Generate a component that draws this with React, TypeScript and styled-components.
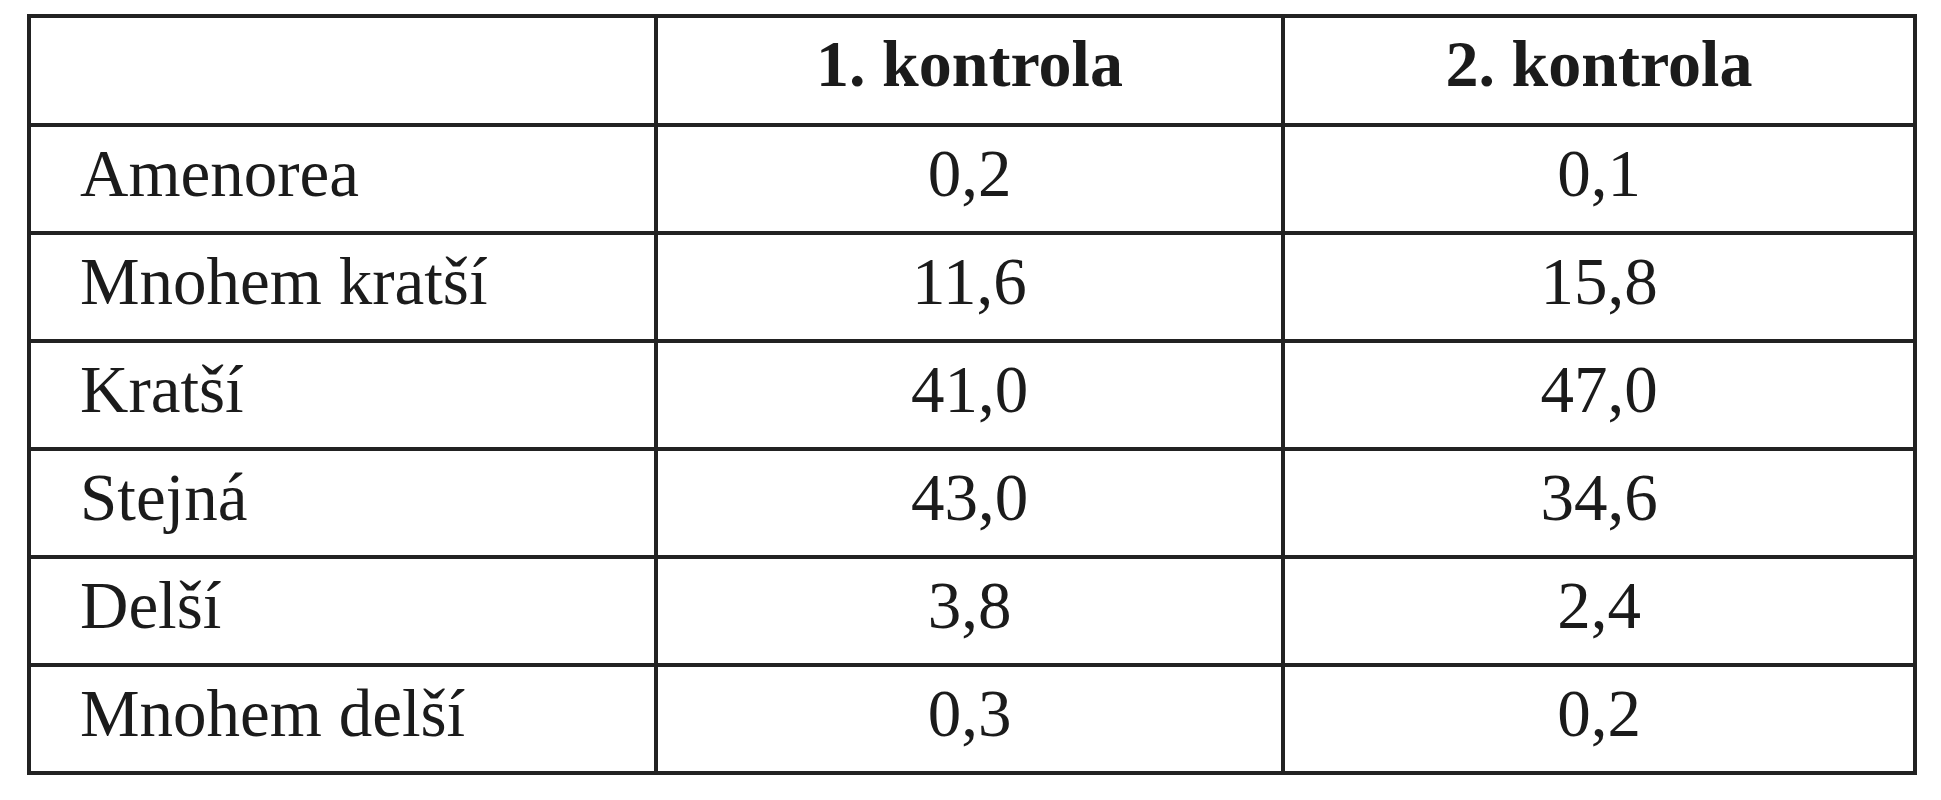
import styled, { createGlobalStyle } from 'styled-components';

type Row = {
  label: string;
  first: string;
  second: string;
};

const rows: Row[] = [
  { label: 'Amenorea', first: '0,2', second: '0,1' },
  { label: 'Mnohem kratší', first: '11,6', second: '15,8' },
  { label: 'Kratší', first: '41,0', second: '47,0' },
  { label: 'Stejná', first: '43,0', second: '34,6' },
  { label: 'Delší', first: '3,8', second: '2,4' },
  { label: 'Mnohem delší', first: '0,3', second: '0,2' },
];

const GlobalStyle = createGlobalStyle`
  html, body {
    margin: 0;
    padding: 0;
    background: #ffffff;
  }
  body {
    font-family: "Liberation Serif", "Times New Roman", serif;
    color: #1b1b1b;
  }
`;

const Page = styled.div`
  padding: 14px 0 0 27px;
`;

const Table = styled.table`
  border-collapse: separate;
  border-spacing: 0;
  border-top: 4px solid #222;
  border-left: 4px solid #222;
  table-layout: fixed;
  width: 1890px;
`;

const HeadCell = styled.th<{ $width?: number }>`
  box-sizing: border-box;
  width: ${(p) => (p.$width ? `${p.$width}px` : 'auto')};
  height: 109px;
  padding: 0 0 12px 0;
  border-right: 4px solid #222;
  border-bottom: 4px solid #222;
  font-size: 66px;
  font-weight: 700;
  text-align: center;
  vertical-align: middle;
  line-height: 1.1;
`;

const Cell = styled.td<{ $label?: boolean }>`
  box-sizing: border-box;
  height: 108px;
  padding: 0 0 10px ${(p) => (p.$label ? '49px' : '0')};
  border-right: 4px solid #222;
  border-bottom: 4px solid #222;
  font-size: 67px;
  font-weight: 400;
  text-align: ${(p) => (p.$label ? 'left' : 'center')};
  vertical-align: middle;
  line-height: 1.1;
  white-space: nowrap;
`;

export default function App() {
  return (
    <>
      <GlobalStyle />
      <Page>
        <Table>
          <thead>
            <tr>
              <HeadCell $width={627} />
              <HeadCell $width={627}>1. kontrola</HeadCell>
              <HeadCell>2. kontrola</HeadCell>
            </tr>
          </thead>
          <tbody>
            {rows.map((row) => (
              <tr key={row.label}>
                <Cell $label>{row.label}</Cell>
                <Cell>{row.first}</Cell>
                <Cell>{row.second}</Cell>
              </tr>
            ))}
          </tbody>
        </Table>
      </Page>
    </>
  );
}
